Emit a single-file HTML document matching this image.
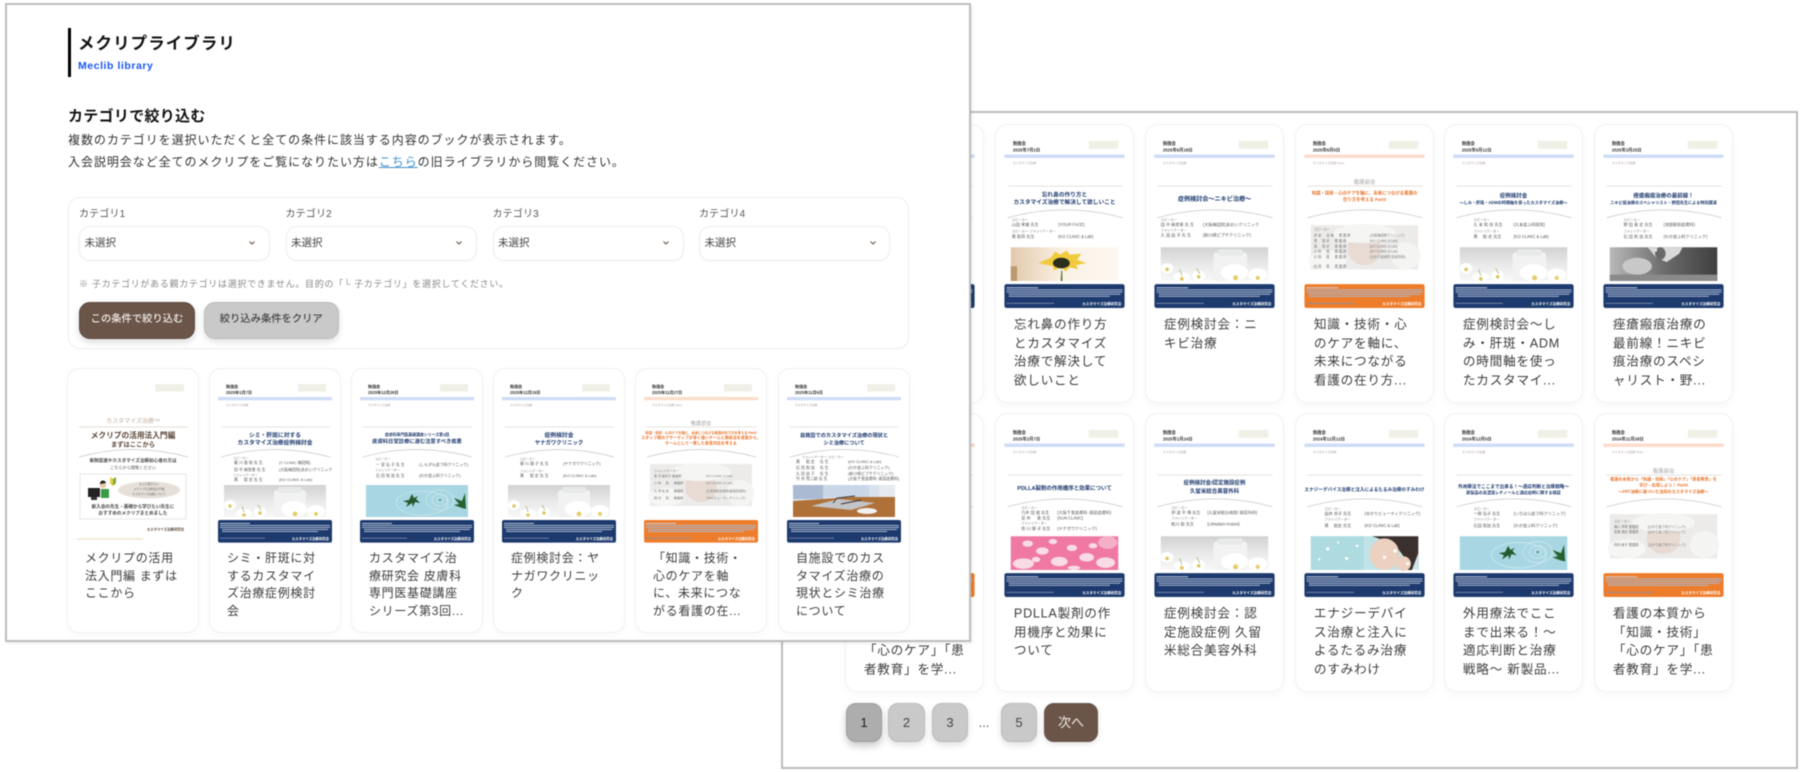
<!DOCTYPE html>
<html lang="ja"><head><meta charset="utf-8"><title>メクリプライブラリ</title>
<style>
html,body{margin:0;padding:0;background:#fff}
#r{position:relative;width:1800px;height:772px;overflow:hidden;background:#fff;font-family:"Liberation Sans","Noto Sans CJK JP",sans-serif;filter:blur(.45px)}
#r div,#r a{position:absolute;box-sizing:border-box;white-space:nowrap}
.p{background:#fff;border:2px solid #bcbcbc}
.c{width:130px;height:263px;background:#fff;border-radius:11px;box-shadow:0 0 0 1px #f1f1f1,0 3px 9px rgba(0,0,0,.035)}
.b{transform-origin:0 0;transform:scale(1.054)}
.c svg{position:absolute;left:0;top:0;overflow:visible}
#r .tt{left:17px;top:181px;font-size:12px;line-height:17.7px;letter-spacing:.68px;color:#3d3d3d}
svg text{font-family:"Liberation Sans","Noto Sans CJK JP",sans-serif}
.h{font-size:4.1px;font-weight:700;fill:#333}
.m{font-size:2.8px;fill:#a99}
.n{font-size:5.8px;font-weight:700;fill:#1d3a6e;text-anchor:middle}
.n2{font-size:4.4px;font-weight:700;fill:#1d3a6e;text-anchor:middle}
.o{font-size:4.6px;font-weight:700;fill:#e8742a;text-anchor:middle}
.k{font-size:5.2px;fill:#a8a8a8;text-anchor:middle}
.s{font-size:3.9px;fill:#555}
.s3{font-size:3.1px;fill:#777}
.w{font-size:3.4px;font-weight:700;fill:#fff;text-anchor:end}
.sel{top:226px;width:191px;height:35px;background:#fff;border:1px solid #ececec;border-radius:11px;box-shadow:0 1px 2px rgba(0,0,0,.03);font-size:10.5px;color:#444;line-height:33px;padding-left:4.5px}
.lab{top:207.5px;font-size:10px;letter-spacing:.15px;color:#555;line-height:14px}
.pg{top:703px;height:39px;border-radius:10px;background:#c9c9c9;border:1px solid #bbb;box-shadow:0 3px 7px rgba(0,0,0,.13);font-size:13px;text-align:center;line-height:37px;color:#444}
</style></head><body>
<svg width="0" height="0" style="position:absolute"><defs>
<linearGradient id="gf" x1="0" y1="0" x2="0" y2="1"><stop offset="0" stop-color="#d2d2d2"/><stop offset=".5" stop-color="#e9e9e9"/><stop offset="1" stop-color="#f8f8f8"/></linearGradient>
<linearGradient id="gs" x1="0" y1="0" x2="1" y2="0"><stop offset="0" stop-color="#e2c9ac"/><stop offset=".5" stop-color="#fbf2e6"/><stop offset="1" stop-color="#fdf8f0"/></linearGradient>
<linearGradient id="gb" x1="0" y1="0" x2="1" y2="0"><stop offset="0" stop-color="#b9b9b9"/><stop offset=".5" stop-color="#6c6c6c"/><stop offset="1" stop-color="#3f3f3f"/></linearGradient>
<g id="base"><rect x="88" y="15" width="28" height="7.5" fill="#f0f0e6"/><path d="M11 58H120" stroke="#ddd8d2" stroke-width=".8"/><path d="M11 88Q65 73 120 88" fill="none" stroke="#c9c9c9" stroke-width=".7"/></g>
<g id="tail"><rect x="10" y="154" width="30" height=".9" fill="#cfd6e4"/><rect x="10" y="156" width="110" height="1" fill="#a9b7d0"/><rect x="10" y="158" width="110" height="1" fill="#a9b7d0"/><rect x="12" y="160" width="106" height="1" fill="#a9b7d0"/><rect x="12" y="162" width="96" height="1" fill="#a9b7d0"/><rect x="10" y="168.8" width="45" height=".8" fill="#7e90b0"/><text class="w" x="119" y="171">カスタマイズ治療研究会</text></g>
<g id="bl"><use href="#base"/><rect x="8" y="28" width="114" height="3.3" fill="#cfdcf5"/><text class="m" x="16" y="37">カスタマイズ治療</text><rect x="8" y="151" width="114" height="22.6" rx="2" fill="#1d3a6e"/><use href="#tail"/></g>
<g id="or"><use href="#base"/><rect x="8" y="28" width="114" height="3.3" fill="#fcdccb"/><text class="m" x="16" y="37">カスタマイズ治療 Team</text><rect x="8" y="151" width="114" height="22.6" rx="2" fill="#ee7d2b"/><use href="#tail"/><text class="k" x="65" y="56">看護部会</text></g>
<g id="flower"><rect x="14" y="116" width="102" height="32" fill="url(#gf)"/><rect x="64" y="121" width="32" height="27" rx="3" fill="#f1f2f1"/><rect x="68" y="118" width="24" height="6" rx="2" fill="#e8eaea"/><ellipse cx="20" cy="136" rx="6" ry="5" fill="#fff"/><ellipse cx="34" cy="144" rx="8" ry="4" fill="#fff"/><ellipse cx="50" cy="143" rx="6" ry="5" fill="#fff"/><ellipse cx="84" cy="140" rx="13" ry="8" fill="#fff"/><ellipse cx="106" cy="142" rx="9" ry="6" fill="#fff"/><circle cx="20" cy="137" r="1.7" fill="#dcc760"/><circle cx="34" cy="146" r="1.8" fill="#e2c760"/><circle cx="50" cy="144" r="1.7" fill="#dcc760"/><circle cx="85" cy="145" r="2.4" fill="#e6cd6c"/><circle cx="106" cy="145" r="2" fill="#e6cd6c"/><path d="M48 136l3 5M32 137l2 6" stroke="#a9b47c" stroke-width=".8"/></g>
<g id="water"><rect x="14" y="116" width="102" height="32" fill="#a8d6e2"/><g fill="none" stroke="#d6eef3" stroke-width=".6"><ellipse cx="88" cy="131" rx="3" ry="2.5"/><ellipse cx="88" cy="131" rx="8" ry="6"/><ellipse cx="88" cy="131" rx="14" ry="10"/><ellipse cx="70" cy="134" rx="26" ry="12"/></g><circle cx="88" cy="131" r="1.3" fill="#5f9fb4"/><path d="M60 125l-3 6-6 1 5 2-2 4 6-4 1 4 2-5 5 1-4-4 2-3-4 2z" fill="#27592e"/><path d="M113 124l-3 8-8-3 5 6-5 1 8 3 4 1z" fill="#28602f"/></g>
<g id="sun"><rect x="14" y="116" width="102" height="32" fill="url(#gs)"/><path d="M62 138l-.6 10h1.6l-.2-10z" fill="#4c6a25"/><path d="M40 131l12-5 4-6 5 3 6-4 3 4 11-1-4 6 9 3-10 2 2 4-8-2-4 4-4-4-7 3-1-4z" fill="#f1cb3d"/><ellipse cx="62" cy="131" rx="8" ry="5" fill="#2b2f1e"/><rect x="14" y="134" width="6" height="14" fill="#bb9a6e"/></g>
<g id="bw"><rect x="14" y="116" width="102" height="32" fill="url(#gb)"/><path d="M14 148v-6h102v6z" fill="#8a8a8a"/><ellipse cx="40" cy="134" rx="14" ry="8" fill="#c8c8c8"/><path d="M50 116l8 10 10 4 12-8 3-6z" fill="#d8d8d8"/><ellipse cx="62" cy="122" rx="5" ry="6" fill="#6a6a6a"/><circle cx="58" cy="119" r="1" fill="#fff"/></g>
<g id="pink"><rect x="14" y="116" width="102" height="32" fill="#ef79a3"/><g fill="#f9dbe6"><ellipse cx="26" cy="142" rx="10" ry="5"/><ellipse cx="44" cy="130" rx="6" ry="3.5"/><ellipse cx="60" cy="140" rx="8" ry="4.5"/><ellipse cx="72" cy="127" rx="5" ry="3"/><ellipse cx="86" cy="136" rx="7" ry="4"/><ellipse cx="104" cy="141" rx="9" ry="5"/><ellipse cx="30" cy="123" rx="5" ry="3"/><ellipse cx="54" cy="121" rx="4" ry="2.5"/><ellipse cx="38" cy="138" rx="4" ry="2.5"/><ellipse cx="74" cy="146" rx="6" ry="2"/><ellipse cx="92" cy="125" rx="4" ry="2.5"/><ellipse cx="106" cy="122" rx="9" ry="6" fill="#f5b0c8"/></g></g>
<g id="face"><rect x="14" y="116" width="102" height="32" fill="#bfe3e6"/><rect x="14" y="116" width="50" height="32" fill="#aedbe0"/><path d="M72 116H116V148H106C104 130 92 122 72 116z" fill="#3b302d"/><ellipse cx="84" cy="133" rx="14" ry="15" fill="#ecd0c0"/><ellipse cx="102" cy="142" rx="7" ry="7" fill="#ecd0c0"/><path d="M116 132V148H110z" fill="#cfe8ea"/><g fill="#fff"><circle cx="30" cy="128" r="1.6"/><circle cx="48" cy="137" r="1.5"/><circle cx="40" cy="122" r="1"/><circle cx="22" cy="138" r="1"/><circle cx="58" cy="125" r="1.2"/><circle cx="84" cy="136" r="1.5"/><circle cx="94" cy="130" r="1.7"/><circle cx="106" cy="142" r="1.5"/></g></g>
<g id="desk"><rect x="14" y="116" width="102" height="32" fill="#d9e1ec"/><rect x="14" y="116" width="30" height="14" fill="#a9bad2"/><rect x="44" y="116" width="46" height="12" fill="#c9d6e8"/><rect x="100" y="116" width="16" height="12" fill="#e7eaee"/><path d="M14 132l60-4h42v20H14z" fill="#b07138"/><path d="M32 137l28-7 36 4-24 7z" fill="#c3c4c8"/><ellipse cx="88" cy="142" rx="10" ry="3" fill="#f1f1f1"/><path d="M54 134l4-5 18-2M62 135l20-4" stroke="#333" stroke-width=".9" fill="none"/></g>
<g id="baby"><rect x="14" y="95" width="102" height="42" fill="#ecebea"/><ellipse cx="65" cy="118" rx="16" ry="15" fill="#e7dbd4"/><ellipse cx="65" cy="103" rx="30" ry="9" fill="#f5f5f4"/><ellipse cx="30" cy="128" rx="18" ry="9" fill="#f6f6f5"/><ellipse cx="104" cy="124" rx="14" ry="13" fill="#f4f4f3"/></g>
</defs></svg>

<div id="r">

<div class="p" style="left:781px;top:111px;width:1017px;height:658px"></div>

<div class="c b" style="left:846px;top:125px"><svg width="130" height="180"><use href="#bl"/></svg></div>

<div class="c b" style="left:996px;top:125px"><svg width="130" height="180"><use href="#bl"/><text class="h" x="16" y="19">勉強会</text><text class="h" x="16" y="25">2025年7月2日</text><text class="n" x="65" y="68" style="font-size:5.4px">忘れ鼻の作り方と</text><text class="n" x="65" y="75" style="font-size:5.4px">カスタマイズ治療で解決して欲しいこと</text><text class="s3" x="15" y="91">スピーカー</text><text class="s" x="15" y="96">山田 孝雄 先生</text><text class="s" x="59" y="96">(YOUR FACE)</text><text class="s3" x="15" y="102">スピーカー･ファシリテーター</text><text class="s" x="15" y="107">黒 聡将 先生</text><text class="s" x="59" y="107">(KO CLINIC &amp; Lab)</text><use href="#sun"/></svg><div class="tt">忘れ鼻の作り方<br>とカスタマイズ<br>治療で解決して<br>欲しいこと</div></div>

<div class="c b" style="left:1146px;top:125px"><svg width="130" height="180"><use href="#bl"/><text class="h" x="16" y="19">勉強会</text><text class="h" x="16" y="25">2025年6月18日</text><text class="n" x="65" y="72">症例検討会〜ニキビ治療〜</text><text class="s3" x="14" y="91">スピーカー</text><text class="s" x="14" y="96">田 中 麻里恵 先 生</text><text class="s" x="54" y="96">(大阪梅田院)あおいクリニック</text><text class="s3" x="14" y="101">ファシリテーター</text><text class="s" x="14" y="106">久 田 由 子 先 生</text><text class="s" x="54" y="106">(新川崎どプチクリニック)</text><use href="#flower"/></svg><div class="tt">症例検討会：ニ<br>キビ治療</div></div>

<div class="c b" style="left:1295.5px;top:125px"><svg width="130" height="180"><use href="#or"/><text class="h" x="16" y="19">勉強会</text><text class="h" x="16" y="25">2025年6月5日</text><text class="o" x="65" y="66" style="font-size:4.2px">知識・技術・心のケアを軸に、未来につなげる看護の</text><text class="o" x="65" y="72" style="font-size:4.2px">在り方を考える Part3</text><use href="#baby"/><text class="s3" x="17" y="100">スピーカー</text><text class="s3" x="17" y="106">伊 波 　 由 美 　 看 護 師</text><text class="s3" x="70" y="106">(大阪梅田院クリニック)</text><text class="s3" x="17" y="111">黒 　 聡 史 　 看 護 師</text><text class="s3" x="70" y="111">(KO CLINIC &amp; Lab)</text><text class="s3" x="17" y="116">森 　 聡 史 　 看 護 師</text><text class="s3" x="70" y="116">(KO CLINIC &amp; Lab)</text><text class="s3" x="17" y="121">小 林 　 聡 　 看 護 師</text><text class="s3" x="70" y="121">(KO CLINIC &amp; Lab)</text><text class="s3" x="17" y="126">片 岡 　 聡 　 看 護 師</text><text class="s3" x="70" y="126">(ひかり皮膚科 形成外科)</text><text class="s3" x="17" y="135">松 岡 　 聡 　 看 護 師</text></svg><div class="tt">知識・技術・心<br>のケアを軸に、<br>未来につながる<br>看護の在り方...</div></div>

<div class="c b" style="left:1445px;top:125px"><svg width="130" height="180"><use href="#bl"/><text class="h" x="16" y="19">勉強会</text><text class="h" x="16" y="25">2025年5月12日</text><text class="n" x="65" y="69" style="font-size:5.2px">症例検討会</text><text class="n2" x="65" y="75" style="font-size:3.9px">〜しみ・肝斑・ADMの時間軸を使ったカスタマイズ治療〜</text><text class="s3" x="27" y="91">スピーカー</text><text class="s" x="27" y="96">久 本 和 央 先生</text><text class="s" x="65" y="96">(久本皮ふ科医院)</text><text class="s3" x="27" y="102">ファシリテーター</text><text class="s" x="27" y="107">黒 　聡 史 先生</text><text class="s" x="65" y="107">(KO CLINIC &amp; Lab)</text><use href="#flower"/></svg><div class="tt">症例検討会〜し<br>み・肝斑・ADM<br>の時間軸を使っ<br>たカスタマイ...</div></div>

<div class="c b" style="left:1595px;top:125px"><svg width="130" height="180"><use href="#bl"/><text class="h" x="16" y="19">勉強会</text><text class="h" x="16" y="25">2025年3月25日</text><text class="n" x="65" y="69" style="font-size:5.2px">痤瘡瘢痕治療の最前線！</text><text class="n2" x="65" y="75" style="font-size:3.9px">ニキビ痕治療のスペシャリスト・野田先生による特別講演</text><text class="s3" x="27" y="91">スピーカー</text><text class="s" x="27" y="96">野 田 真 史 先生</text><text class="s" x="65" y="96">(池袋駅前皮膚科)</text><text class="s3" x="27" y="102">ファシリテーター</text><text class="s" x="27" y="107">石 田 和 加 先生</text><text class="s" x="65" y="107">(わか皮ふ科クリニック)</text><use href="#bw"/></svg><div class="tt">痤瘡瘢痕治療の<br>最前線！ニキビ<br>痕治療のスペシ<br>ャリスト・野...</div></div>

<div class="c b" style="left:846px;top:414px"><svg width="130" height="180"><use href="#or"/></svg><div class="tt">看護の本質から<br>「知識・技術」<br>「心のケア」「患<br>者教育」を学...</div></div>

<div class="c b" style="left:996px;top:414px"><svg width="130" height="180"><use href="#bl"/><text class="h" x="16" y="19">勉強会</text><text class="h" x="16" y="25">2025年2月7日</text><text class="n" x="65" y="72" style="font-size:5.2px">PDLLA製剤の作用機序と効果について</text><text class="s3" x="24" y="90">スピーカー</text><text class="s" x="24" y="95">乃木 田 俊 先生</text><text class="s" x="58" y="95">(大阪千里皮膚科･美容皮膚科)</text><text class="s" x="24" y="100">宮 井 　 恵 先生</text><text class="s" x="58" y="100">(SUN CLINIC)</text><text class="s3" x="24" y="105">ファシリテーター</text><text class="s" x="24" y="110">奈 川 理 子 先生</text><text class="s" x="58" y="110">(ヤナガワクリニック)</text><use href="#pink"/></svg><div class="tt">PDLLA製剤の作<br>用機序と効果に<br>ついて</div></div>

<div class="c b" style="left:1146px;top:414px"><svg width="130" height="180"><use href="#bl"/><text class="h" x="16" y="19">勉強会</text><text class="h" x="16" y="25">2025年1月24日</text><text class="n" x="65" y="67" style="font-size:5.2px">症例検討会/認定施設症例</text><text class="n" x="65" y="75" style="font-size:5.2px">久留米総合美容外科</text><text class="s3" x="24" y="90">スピーカー</text><text class="s" x="24" y="95">伊 波 平 博 先生</text><text class="s" x="58" y="95">(久留米総合病院/ 美容外科)</text><text class="s3" x="24" y="100">ファシリテーター</text><text class="s" x="24" y="106">乾川 聡 先生</text><text class="s" x="58" y="106">(LIMadam Kotani)</text><use href="#flower"/></svg><div class="tt">症例検討会：認<br>定施設症例 久留<br>米総合美容外科</div></div>

<div class="c b" style="left:1295.5px;top:414px"><svg width="130" height="180"><use href="#bl"/><text class="h" x="16" y="19">勉強会</text><text class="h" x="16" y="25">2024年12月12日</text><text class="n2" x="65" y="73">エナジーデバイス治療と注入によるたるみ治療のすみわけ</text><text class="s3" x="27" y="91">スピーカー</text><text class="s" x="27" y="96">由井 克子 先生</text><text class="s" x="65" y="96">(ゆかりビューティクリニック)</text><text class="s3" x="27" y="101">ファシリテーター</text><text class="s" x="27" y="107">黒 　聡史 先生</text><text class="s" x="65" y="107">(KO CLINIC &amp; Lab)</text><use href="#face"/></svg><div class="tt">エナジーデバイ<br>ス治療と注入に<br>よるたるみ治療<br>のすみわけ</div></div>

<div class="c b" style="left:1445px;top:414px"><svg width="130" height="180"><use href="#bl"/><text class="h" x="16" y="19">勉強会</text><text class="h" x="16" y="25">2024年12月5日</text><text class="n2" x="65" y="70">外用療法でここまで出来る！〜適応判断と治療戦略〜</text><text class="n2" x="65" y="76" style="font-size:3.9px">新製品の高濃度レチノールと適応症例に関する検証</text><text class="s3" x="27" y="91">スピーカー</text><text class="s" x="27" y="96">一原 弘子 先生</text><text class="s" x="65" y="96">(いちはら皮フ科クリニック)</text><text class="s3" x="27" y="101">ファシリテーター</text><text class="s" x="27" y="107">石田 和加 先生</text><text class="s" x="65" y="107">(わか皮ふ科クリニック)</text><use href="#water"/></svg><div class="tt">外用療法でここ<br>まで出来る！〜<br>適応判断と治療<br>戦略〜 新製品...</div></div>

<div class="c b" style="left:1595px;top:414px"><svg width="130" height="180"><use href="#or"/><text class="h" x="16" y="19">勉強会</text><text class="h" x="16" y="25">2024年11月28日</text><text class="o" x="65" y="63" style="font-size:3.9px">看護の本質から「知識・技術」「心のケア」「患者教育」を</text><text class="o" x="65" y="69" style="font-size:3.9px">学び・応用しよう！ Part4</text><text class="o" x="65" y="75" style="font-size:3.9px">〜FRT治療に基づいた当院のカスタマイズ治療〜</text><use href="#baby"/><text class="s3" x="18" y="103">スピーカー</text><text class="s3" x="18" y="108">瀬川 早希 看護師</text><text class="s3" x="50" y="108">(ひかり皮フ科クリニック)</text><text class="s3" x="18" y="113">佐藤 美紀 看護師</text><text class="s3" x="50" y="113">(ひかり皮フ科クリニック)</text><text class="s3" x="18" y="125">岡内 麻子 看護師</text><text class="s3" x="50" y="125">(ひかり皮フ科クリニック)</text></svg><div class="tt">看護の本質から<br>「知識・技術」<br>「心のケア」「患<br>者教育」を学...</div></div>

<div class="pg" style="left:846px;width:36px;background:#adadad;border-color:#9c9c9c;box-shadow:0 4px 8px rgba(0,0,0,.22);color:#222">1</div>
<div class="pg" style="left:888px;width:37px">2</div>
<div class="pg" style="left:932px;width:36px">3</div>
<div style="left:975px;top:714px;font-size:13px;color:#555;line-height:18px;width:18px;text-align:center">...</div>
<div class="pg" style="left:1001px;width:36px">5</div>
<div class="pg" style="left:1044px;width:54px;background:#6b5549;border-color:#6b5549;color:#f3eeea;box-shadow:0 2px 6px rgba(0,0,0,.12)">次へ</div>

<div class="p" style="left:5px;top:3px;width:966px;height:639px;box-shadow:2px 2px 2px rgba(0,0,0,.06)"></div>
<div style="left:67.5px;top:28px;width:3px;height:49px;background:#000"></div>
<div style="left:78px;top:32.5px;font-size:16.5px;font-weight:700;letter-spacing:1.05px;line-height:22px;color:#111">メクリプライブラリ</div>
<div style="left:78px;top:58.5px;font-size:10.5px;font-weight:700;letter-spacing:.55px;line-height:15px;color:#1a56f0">Meclib library</div>
<div style="left:68px;top:105.7px;font-size:15px;font-weight:700;letter-spacing:.3px;line-height:22px;color:#111">カテゴリで絞り込む</div>
<div style="left:68px;top:131px;font-size:12px;letter-spacing:.95px;line-height:19px;color:#333">複数のカテゴリを選択いただくと全ての条件に該当する内容のブックが表示されます。</div>
<div style="left:68px;top:153px;font-size:12px;letter-spacing:.95px;line-height:19px;color:#333">入会説明会など全てのメクリプをご覧になりたい方は<span style="color:#3d8fc9;text-decoration:underline">こちら</span>の旧ライブラリから閲覧ください。</div>

<div style="left:68px;top:197.3px;width:841px;height:152px;background:#fff;border:1px solid #eee;border-radius:12px;box-shadow:0 1px 3px rgba(0,0,0,.02)"></div>
<div class="lab" style="left:79px">カテゴリ1</div>
<div class="lab" style="left:285.5px">カテゴリ2</div>
<div class="lab" style="left:492.5px">カテゴリ3</div>
<div class="lab" style="left:699px">カテゴリ4</div>
<div class="sel" style="left:79px">未選択</div>
<div class="sel" style="left:285.5px">未選択</div>
<div class="sel" style="left:492.5px">未選択</div>
<div class="sel" style="left:699px">未選択</div>
<svg style="position:absolute;left:0;top:0;z-index:2" width="1000" height="320" fill="none" stroke="#6b5549" stroke-width="1.1"><path d="M249.5 241.5l2.5 2.5 2.5-2.5M456.5 241.5l2.5 2.5 2.5-2.5M663.5 241.5l2.5 2.5 2.5-2.5M870.5 241.5l2.5 2.5 2.5-2.5"/></svg>
<div style="left:79px;top:277px;font-size:9px;letter-spacing:.7px;line-height:14px;color:#888">※ 子カテゴリがある親カテゴリは選択できません。目的の「└ 子カテゴリ」を選択してください。</div>
<div style="left:79px;top:302px;width:116px;height:36.5px;border-radius:11px;background:#6b5549;border:1px solid #5f4b40;box-shadow:0 3px 7px rgba(0,0,0,.15);color:#f1ece8;font-size:10.3px;text-align:center;line-height:34.5px;font-weight:500">この条件で絞り込む</div>
<div style="left:203.5px;top:302px;width:135.5px;height:36.5px;border-radius:11px;background:#c9c9c9;border:1px solid #bbb;box-shadow:0 3px 7px rgba(0,0,0,.12);color:#444;font-size:10.3px;text-align:center;line-height:34.5px;font-weight:500">絞り込み条件をクリア</div>

<div class="c" style="left:68px;top:369px"><svg width="130" height="180"><rect x="87" y="15" width="29" height="7.5" fill="#f0f0e6"/><text x="65" y="54" text-anchor="middle" style="font-size:6px;fill:#c0ab9c">カスタマイズ治療™</text><path d="M11 58H120" stroke="#ddd0c6" stroke-width=".8"/><text x="65" y="69" text-anchor="middle" style="font-size:7.7px;font-weight:700;fill:#5a4638">メクリプの活用法入門編</text><text x="65" y="77.5" text-anchor="middle" style="font-size:6.3px;font-weight:700;fill:#5a4638">まずはここから</text><path d="M11 88Q65 73 120 88" fill="none" stroke="#c9c9c9" stroke-width=".7"/><text x="65" y="93" text-anchor="middle" style="font-size:4.6px;font-weight:700;fill:#444">来院促進やカスタマイズ治療初心者の方は</text><text x="65" y="100" text-anchor="middle" style="font-size:4.2px;fill:#555">こちらから閲覧ください</text><rect x="12" y="105" width="106" height="45" fill="#fff" stroke="#ddd" stroke-width=".7"/><rect x="20" y="119" width="12" height="9" fill="#222"/><rect x="23" y="128" width="6" height="3" fill="#333"/><circle cx="35" cy="116" r="3.2" fill="#e8c9a8"/><path d="M32 115a3 3 0 0 1 6-1z" fill="#222"/><rect x="33" y="120" width="8" height="9" fill="#3a9a44"/><path d="M42 108l3 2 3-2v6l-3 3-3-3z" fill="#7ca83a"/><path d="M42 108l3 2v7l-3-3z" fill="#e6cf3a"/><ellipse cx="81" cy="121" rx="31" ry="8.5" fill="#e7e0d9"/><text x="81" y="116" text-anchor="middle" style="font-size:2.8px;fill:#666">もっと知りたい</text><text x="81" y="121" text-anchor="middle" style="font-size:2.8px;fill:#666">メクリプの活用法入門編</text><text x="81" y="126" text-anchor="middle" style="font-size:2.8px;fill:#666">カスタマイズ治療について</text><text x="65" y="139" text-anchor="middle" style="font-size:4.6px;font-weight:700;fill:#444">新入会の先生・基礎から学びたい先生に</text><text x="65" y="145.5" text-anchor="middle" style="font-size:4.6px;font-weight:700;fill:#444">おすすめのメクリプまとめました</text><text x="116" y="161.5" text-anchor="end" style="font-size:3.4px;font-weight:700;fill:#5a4638">カスタマイズ治療研究会</text><rect x="9" y="169.6" width="66" height="1" fill="#ecd8c4"/></svg><div class="tt">メクリプの活用<br>法入門編 まずは<br>ここから</div></div>

<div class="c" style="left:210px;top:369px"><svg width="130" height="180"><use href="#bl"/><text class="h" x="16" y="19">勉強会</text><text class="h" x="16" y="25">2025年1月7日</text><text class="n" x="65" y="68">シミ・肝斑に対する</text><text class="n" x="65" y="75.5">カスタマイズ治療症例検討会</text><text class="s3" x="23" y="90">スピーカー</text><text class="s" x="24" y="95">薬 川 直 和 先 生</text><text class="s" x="69" y="95">(Y CLINIC 梅田院)</text><text class="s" x="24" y="102">田 中 麻里恵 先 生</text><text class="s" x="69" y="102">(大阪梅田院)あおいクリニック</text><text class="s3" x="23" y="107">ファシリテーター</text><text class="s" x="24" y="112">黒 　 聡 史 先 生</text><text class="s" x="69" y="112">(KO CLINIC &amp; Lab)</text><use href="#flower"/></svg><div class="tt">シミ・肝斑に対<br>するカスタマイ<br>ズ治療症例検討<br>会</div></div>

<div class="c" style="left:352px;top:369px"><svg width="130" height="180"><use href="#bl"/><text class="h" x="16" y="19">勉強会</text><text class="h" x="16" y="25">2025年12月26日</text><text class="n2" x="65" y="67" style="font-size:3.9px">皮膚科専門医基礎講座シリーズ第3回</text><text class="n" x="65" y="74" style="font-size:5.3px">皮膚科日常診療に潜む注意すべき疾患</text><text class="s3" x="23" y="91">スピーカー</text><text class="s" x="24" y="97">一 宮 弘 子 先 生</text><text class="s" x="67" y="97">(しもがも皮フ科クリニック)</text><text class="s3" x="23" y="102">ファシリテーター</text><text class="s" x="24" y="108">石 田 和 加 先 生</text><text class="s" x="67" y="108">(わか皮ふ科クリニック)</text><use href="#water"/></svg><div class="tt">カスタマイズ治<br>療研究会 皮膚科<br>専門医基礎講座<br>シリーズ第3回...</div></div>

<div class="c" style="left:494px;top:369px"><svg width="130" height="180"><use href="#bl"/><text class="h" x="16" y="19">勉強会</text><text class="h" x="16" y="25">2025年12月19日</text><text class="n" x="65" y="68">症例検討会</text><text class="n" x="65" y="75.5" style="font-size:5.4px">ヤナガワクリニック</text><text class="s3" x="26" y="91">スピーカー</text><text class="s" x="26" y="96">柳 川 理 子 先 生</text><text class="s" x="69" y="96">(ヤナガワクリニック)</text><text class="s3" x="26" y="103">ファシリテーター</text><text class="s" x="26" y="108">黒 　 聡 史 先 生</text><text class="s" x="69" y="108">(KO CLINIC &amp; Lab)</text><use href="#flower"/></svg><div class="tt">症例検討会：ヤ<br>ナガワクリニッ<br>ク</div></div>

<div class="c" style="left:636px;top:369px"><svg width="130" height="180"><use href="#or"/><text class="h" x="16" y="19">勉強会</text><text class="h" x="16" y="25">2025年11月27日</text><text class="o" x="65" y="65" style="font-size:3.3px">知識・技術・心のケアを軸に、未来につなげる看護の在り方を考える Part3</text><text class="o" x="65" y="70" style="font-size:4px">スタッフ間のアサーティブが導く強いチームと施術法を成果から、</text><text class="o" x="65" y="75.5" style="font-size:4px">チームとして一貫した患者対応を考える</text><use href="#baby"/><text class="s3" x="18" y="103">ファシリテーター</text><text class="s3" x="18" y="108">黒 河 美智子 看護師</text><text class="s3" x="70" y="108">(KO CLINIC &amp; Lab)</text><text class="s3" x="18" y="115">小 林 　 聡 　 看護師</text><text class="s3" x="70" y="115">(KO CLINIC &amp; Lab)</text><text class="s3" x="18" y="123">久 甲 松 永 　 看護師</text><text class="s3" x="70" y="123">(久留米総合病院/美容皮膚科)</text><text class="s3" x="18" y="130">岡 内 　 聡 　 看護師</text><text class="s3" x="70" y="130">(TMCビューティクリニック)</text></svg><div class="tt">「知識・技術・<br>心のケアを軸<br>に、未来につな<br>がる看護の在...</div></div>

<div class="c" style="left:779px;top:369px"><svg width="130" height="180"><use href="#bl"/><text class="h" x="16" y="19">勉強会</text><text class="h" x="16" y="25">2025年11月6日</text><text class="n" x="65" y="68" style="font-size:5.2px">自施設でのカスタマイズ治療の現状と</text><text class="n" x="65" y="75.5" style="font-size:5.2px">シミ治療について</text><text class="s3" x="23" y="89">ファシリテーター･スピーカー</text><text class="s" x="17" y="94">黒 　 聡 史 　先 生</text><text class="s" x="69" y="94">(KO CLINIC &amp; Lab)</text><text class="s" x="17" y="100">石 田 和 加 　先 生</text><text class="s" x="69" y="100">(わか皮ふ科クリニック)</text><text class="s" x="17" y="106">久 田 由 子 　先 生</text><text class="s" x="69" y="106">(新川崎どプチクリニック)</text><text class="s" x="17" y="111">竹 井 賢二郎 先 生</text><text class="s" x="69" y="111">(大阪千里皮膚科･美容皮膚科)</text><use href="#desk"/></svg><div class="tt">自施設でのカス<br>タマイズ治療の<br>現状とシミ治療<br>について</div></div>

</div>
</body></html>
